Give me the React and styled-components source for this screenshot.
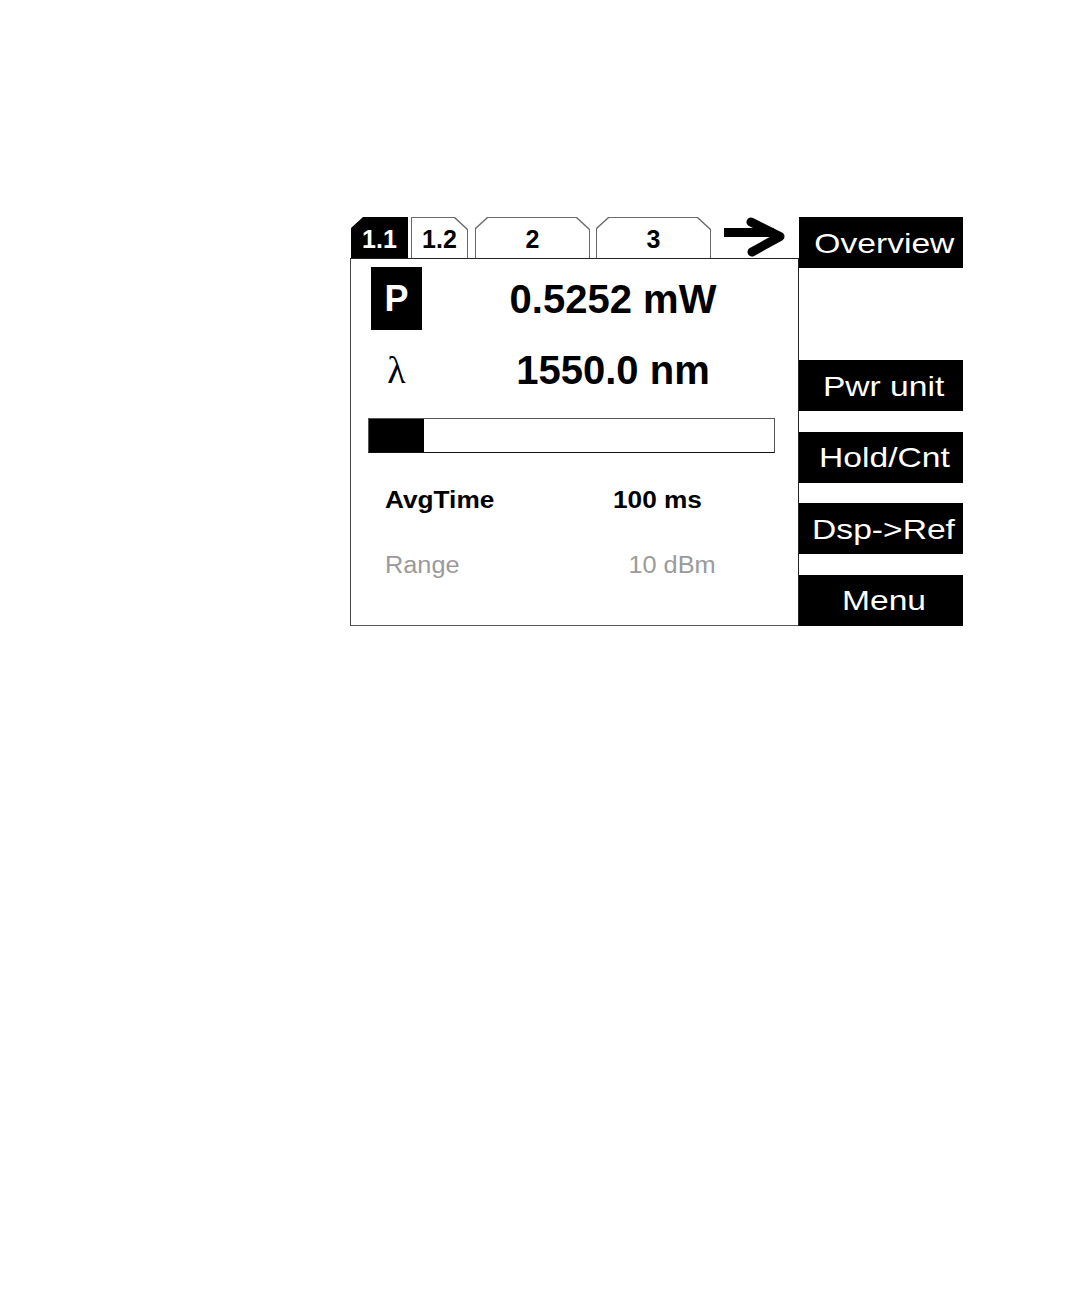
import React from "react";
import styled, { createGlobalStyle } from "styled-components";

const Global = createGlobalStyle`
  html, body { margin: 0; padding: 0; background: #fff; }
  body { font-family: "Liberation Sans", Arial, sans-serif; }
`;

const Page = styled.div`
  padding: 217px 0 0 350px;
`;

const Screen = styled.div`
  display: grid;
  grid-template-columns: 449px 164px;
  height: 409px;
`;

const MainCol = styled.div`
  display: flex;
  flex-direction: column;
`;

const TabBar = styled.div`
  display: flex;
  align-items: flex-end;
  height: 41px;
  padding-left: 1px;
  border-bottom: 1px solid #222;
`;

const chamfer = (l, r) =>
  `polygon(${l ? "12px 0" : "0 0"}, ${r ? "calc(100% - 13px) 0, 100% 12px" : "100% 0"}, 100% 100%, 0 100%${l ? ", 0 11px" : ""})`;

const TabShape = styled.div`
  box-sizing: border-box;
  width: ${(p) => p.$w}px;
  height: 41px;
  margin-left: ${(p) => p.$gap}px;
  padding: 1px 1px 0;
  background: ${(p) => (p.$active ? "#000" : "#6a6a6a")};
  clip-path: ${(p) => chamfer(p.$l, p.$r)};
`;

const TabFace = styled.div`
  box-sizing: border-box;
  height: 100%;
  display: flex;
  align-items: center;
  justify-content: center;
  padding-top: 3px;
  background: ${(p) => (p.$active ? "#000" : "#fff")};
  color: ${(p) => (p.$active ? "#fff" : "#000")};
  clip-path: ${(p) => chamfer(p.$l, p.$r)};
  font-weight: 700;
  font-size: 25px;
  line-height: 1;
`;

const ArrowBox = styled.div`
  align-self: flex-start;
  margin-left: 11px;
  width: 64px;
  height: 40px;
  display: flex;
`;

const Panel = styled.div`
  flex: 1;
  display: flex;
  flex-direction: column;
  padding-top: 8px;
  border-left: 1px solid #444;
  border-right: 1px solid #222;
  border-bottom: 1px solid #555;
`;

const ReadRow = styled.div`
  display: flex;
  align-items: center;
  height: 63px;
  padding-left: 20px;
  margin-top: ${(p) => p.$mt || 0}px;
`;

const Symbol = styled.div`
  width: 51px;
  height: 63px;
  display: flex;
  align-items: center;
  justify-content: center;
  background: ${(p) => (p.$boxed ? "#000" : "transparent")};
  color: ${(p) => (p.$boxed ? "#fff" : "#000")};
  font-family: ${(p) => (p.$serif ? '"Liberation Serif", "Times New Roman", serif' : '"Liberation Sans", Arial, sans-serif')};
  font-weight: ${(p) => (p.$serif ? 400 : 700)};
  font-size: ${(p) => (p.$serif ? 38 : 36)}px;
  line-height: 1;
`;

const Reading = styled.div`
  flex: 1;
  text-align: center;
  padding-left: 6px;
  font-weight: 700;
  font-size: 40px;
  line-height: 1;
  color: #000;
`;

const Bar = styled.div`
  box-sizing: border-box;
  margin: 17px 0 0 17px;
  width: 407px;
  height: 35px;
  border: 1px solid #555;
  border-bottom-color: #111;
  display: flex;
`;

const BarFill = styled.div`
  height: 100%;
  background: #000;
`;

const ParamRow = styled.div`
  display: grid;
  grid-template-columns: 228px 1fr;
  align-items: center;
  height: 30px;
  padding-left: 34px;
  margin-top: ${(p) => p.$mt}px;
  color: ${(p) => (p.$dim ? "#9a9a9a" : "#000")};
  font-weight: ${(p) => (p.$dim ? 400 : 700)};
  font-size: 23px;
  line-height: 1;
`;

const Stretch = styled.span`
  display: inline-block;
  white-space: pre;
  transform: scaleX(${(p) => p.$sx});
  transform-origin: ${(p) => p.$origin || "left center"};
  padding-left: ${(p) => p.$indent || 0}px;
`;

const SoftKeys = styled.div`
  display: flex;
  flex-direction: column;
  justify-content: space-between;
`;

const SoftKey = styled.div`
  height: 51px;
  display: flex;
  align-items: center;
  justify-content: center;
  padding-left: 6px;
  padding-top: 2px;
  box-sizing: border-box;
  background: ${(p) => (p.$empty ? "transparent" : "#000")};
  color: #fff;
  font-size: 28px;
  line-height: 1;
`;

const tabs = [
  { label: "1.1", w: 57, gap: 0, l: true, r: false, active: true },
  { label: "1.2", w: 57, gap: 3, l: false, r: true },
  { label: "2", w: 115, gap: 7, l: true, r: true },
  { label: "3", w: 115, gap: 6, l: true, r: true },
];

const keys = ["Overview", "", "Pwr unit", "Hold/Cnt", "Dsp->Ref", "Menu"];

export default function App() {
  return (
    <>
      <Global />
      <Page>
        <Screen>
          <MainCol>
            <TabBar>
              {tabs.map((t) => (
                <TabShape key={t.label} $w={t.w} $gap={t.gap} $l={t.l} $r={t.r} $active={t.active}>
                  <TabFace $l={t.l} $r={t.r} $active={t.active}>{t.label}</TabFace>
                </TabShape>
              ))}
              <ArrowBox>
                <svg width="64" height="40" viewBox="0 0 64 40">
                  <path d="M2 15.5 H52" stroke="#000" strokeWidth="9" fill="none" />
                  <path
                    d="M29 5 L58 19.5 L30 35"
                    stroke="#000"
                    strokeWidth="9"
                    fill="none"
                    strokeLinecap="round"
                    strokeLinejoin="round"
                  />
                </svg>
              </ArrowBox>
            </TabBar>
            <Panel>
              <ReadRow>
                <Symbol $boxed>P</Symbol>
                <Reading>0.5252 mW</Reading>
              </ReadRow>
              <ReadRow $mt={8}>
                <Symbol $serif>λ</Symbol>
                <Reading>1550.0 nm</Reading>
              </ReadRow>
              <Bar>
                <BarFill style={{ width: "55px" }} />
              </Bar>
              <ParamRow $mt={32}>
                <div><Stretch $sx={1.14}>AvgTime</Stretch></div>
                <div><Stretch $sx={1.14}>100 ms</Stretch></div>
              </ParamRow>
              <ParamRow $mt={35} $dim>
                <div><Stretch $sx={1.1}>Range</Stretch></div>
                <div><Stretch $sx={1.1} $indent={14}>10 dBm</Stretch></div>
              </ParamRow>
            </Panel>
          </MainCol>
          <SoftKeys>
            {keys.map((k, i) => (
              <SoftKey key={i} $empty={!k}>
                {k && <Stretch $sx={1.2} $origin="center">{k}</Stretch>}
              </SoftKey>
            ))}
          </SoftKeys>
        </Screen>
      </Page>
    </>
  );
}
